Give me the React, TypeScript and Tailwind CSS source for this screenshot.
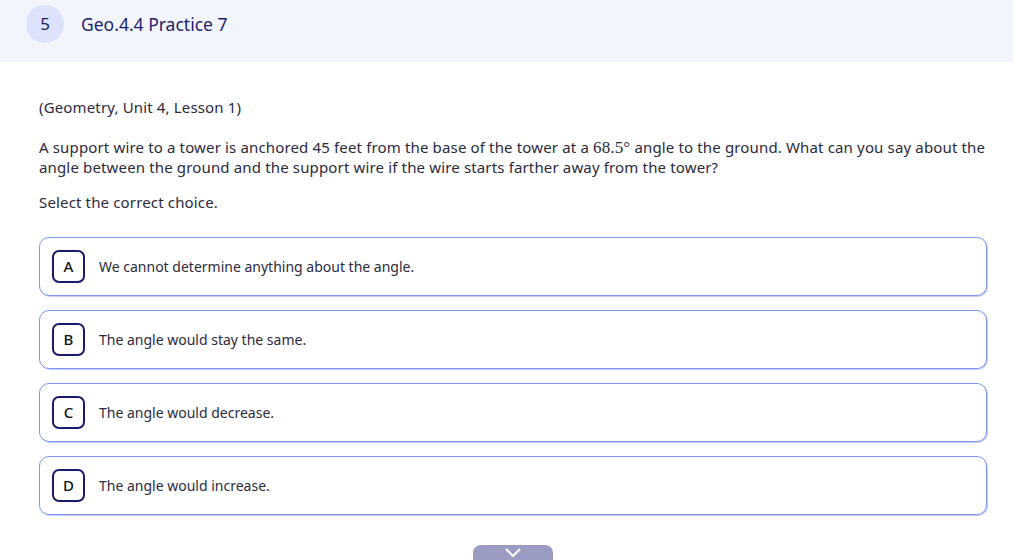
const choices = [
  { letter: 'A', text: 'We cannot determine anything about the angle.' },
  { letter: 'B', text: 'The angle would stay the same.' },
  { letter: 'C', text: 'The angle would decrease.' },
  { letter: 'D', text: 'The angle would increase.' },
]

export default function App() {
  return (
    <div className="relative h-[560px] w-[1013px] overflow-hidden bg-white font-['Noto_Sans','Open_Sans',sans-serif] text-[#2b2a3d]">
      <header className="flex h-[62px] items-center bg-[#f3f5fd] pb-[14px] pl-[26px]">
        <div className="flex h-[38px] w-[38px] items-center justify-center rounded-full bg-[#dde3fb] text-[17px] text-[#1b1e5e]">5</div>
        <h1 className="ml-[17px] text-[17.5px] text-[#1b1e6e]">Geo.4.4 Practice 7</h1>
      </header>

      <main className="pl-[39px] pr-[24px] pt-[35px] text-[15px] tracking-[0.15px]">
        <p className="leading-5">(Geometry, Unit 4, Lesson 1)</p>
        <p className="mt-[20px] leading-5">
          <span>A support wire to a tower is anchored 45 feet from the base of the tower at a</span>{' '}
          <span className="font-['Liberation_Serif',serif] text-[17px] leading-none">68.5°</span>{' '}
          <span>angle to the ground. What can you say about the</span>{' '}
          <span>angle between the ground and the support wire if the wire starts farther away from the tower?</span>
        </p>
        <p className="mt-[15px] leading-5">Select the correct choice.</p>

        <div className="mt-[25px] flex w-[948px] flex-col gap-[14px]">
          {choices.map((c) => (
            <div
              key={c.letter}
              className="flex h-[59px] items-center rounded-[10px] border border-[#7d95f1] bg-white pl-[12px] shadow-[1px_1px_0_#c3cefa]"
            >
              <div className="flex h-[33px] w-[33px] items-center justify-center rounded-[7px] border-2 border-[#1a1a6c] text-[15px] font-medium text-[#111]">
                {c.letter}
              </div>
              <span className="ml-[14px] text-[14px] tracking-normal">{c.text}</span>
            </div>
          ))}
        </div>
      </main>

      <div className="absolute left-[473px] top-[545px] flex h-[20px] w-[80px] justify-center rounded-t-[8px] bg-[#9b9cc4] pt-[3px]">
        <svg width="18" height="10" viewBox="0 0 18 10" fill="none" stroke="white" strokeWidth="2">
          <path d="M2 1l7 7 7-7" />
        </svg>
      </div>
    </div>
  )
}
